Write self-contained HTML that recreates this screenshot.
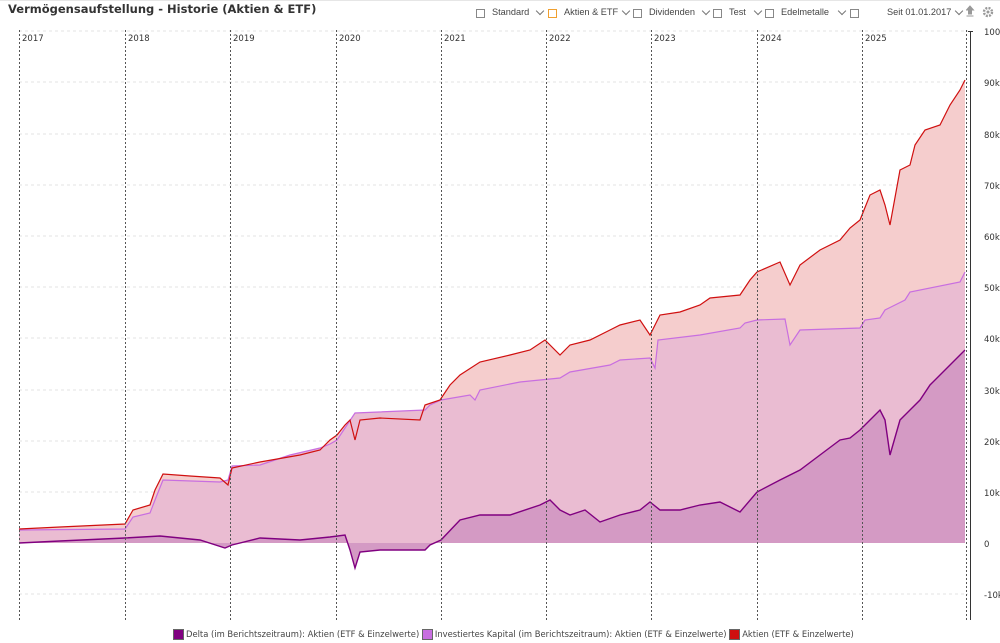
<!DOCTYPE html><html><head><meta charset="utf-8"><style>
body{margin:0;width:1000px;height:643px;background:#fff;font-family:"DejaVu Sans","Liberation Sans",sans-serif;overflow:hidden;position:relative}
.t{position:absolute;left:8px;top:2px;font-size:11.5px;font-weight:bold;color:#333}
.tb{position:absolute;top:7px;font-size:9.2px;color:#444;font-family:"Liberation Sans",sans-serif;white-space:nowrap}
.cb{position:absolute;top:9px;width:7px;height:7px;border:1px solid #888}
.ar{position:absolute;top:8px;width:5px;height:5px;border-right:1px solid #777;border-bottom:1px solid #777;transform:rotate(45deg)}
.lg{position:absolute;top:629px;font-size:8.4px;color:#444;white-space:nowrap}
.sw{display:inline-block;width:11px;height:11px;vertical-align:-3px;margin-right:2px;border:1px solid #666;box-sizing:border-box}
</style></head><body>
<div style="position:absolute;left:0;top:0;width:1000px;height:1px;background:#e6e6e6"></div>
<div class="t">Vermögensaufstellung - Historie (Aktien &amp; ETF)</div>
<div class="cb" style="left:476px"></div><div class="tb" style="left:492px">Standard</div><div class="ar" style="left:537px"></div>
<div class="cb" style="left:548px;border-color:#f0a030"></div><div class="tb" style="left:564px">Aktien &amp; ETF</div><div class="ar" style="left:623px"></div>
<div class="cb" style="left:633px"></div><div class="tb" style="left:649px">Dividenden</div><div class="ar" style="left:703px"></div>
<div class="cb" style="left:713px"></div><div class="tb" style="left:729px">Test</div><div class="ar" style="left:755px"></div>
<div class="cb" style="left:765px"></div><div class="tb" style="left:781px">Edelmetalle</div><div class="ar" style="left:839px"></div>
<div class="cb" style="left:850px"></div>
<div class="tb" style="left:887px">Seit 01.01.2017</div><div class="ar" style="left:956px"></div>
<svg width="30" height="16" style="position:absolute;left:966px;top:5px"><path d="M4 1 L0.5 5 H2.5 V9 H5.5 V5 H7.5 Z M0.5 11 H7.5" fill="#999" stroke="#999" stroke-width="1"/><circle cx="22" cy="7" r="4" fill="none" stroke="#999" stroke-width="2.4" stroke-dasharray="2,1.2"/><circle cx="22" cy="7" r="1.5" fill="#999"/></svg>
<svg width="1000" height="643" style="position:absolute;left:0;top:0">
<g stroke="#e3e3e3" stroke-dasharray="3,3">
<line x1="19" x2="968" y1="31" y2="31"/><line x1="19" x2="968" y1="82" y2="82"/><line x1="19" x2="968" y1="134" y2="134"/><line x1="19" x2="968" y1="185" y2="185"/><line x1="19" x2="968" y1="236" y2="236"/><line x1="19" x2="968" y1="287" y2="287"/><line x1="19" x2="968" y1="338" y2="338"/><line x1="19" x2="968" y1="390" y2="390"/><line x1="19" x2="968" y1="441" y2="441"/><line x1="19" x2="968" y1="492" y2="492"/><line x1="19" x2="968" y1="594" y2="594"/>
</g>
<polygon fill="#f5cdcd" points="19,543 19,529 60,527 125,524 133,510 150,505 155,490 163,474 190,476 220,478 228,485 232,468 260,462 300,455 320,450 330,440 337,435 345,425 350,420 355,440 360,420 380,418 420,420 425,405 440,400 450,385 460,375 480,362 510,355 530,350 545,340 560,355 570,345 590,340 610,330 620,325 640,320 650,335 660,315 680,312 700,305 710,298 740,295 750,280 757,272 780,262 790,285 800,265 820,250 840,240 850,228 860,220 870,195 880,190 885,205 890,225 900,170 910,165 915,145 925,130 940,125 950,105 960,90 965,80 965,543"/>
<polygon fill="#eabcd2" points="19,543 19,530 125,529 133,517 150,513 155,500 163,480 220,482 228,480 232,466 260,465 290,455 320,448 330,444 337,440 355,413 425,410 430,405 441,400 470,395 475,400 480,390 520,382 560,378 570,372 610,365 620,360 650,358 655,368 658,340 700,335 740,328 745,323 757,320 785,319 790,345 800,330 860,328 865,320 880,318 885,310 905,300 910,292 960,282 965,272 965,543"/>
<polygon fill="#d49ac4" points="19,543 60,541 125,538 160,536 200,540 225,548 232,545 260,538 300,540 330,537 345,535 350,550 355,568 360,552 380,550 425,550 430,545 441,540 460,520 480,515 510,515 540,505 550,500 560,510 570,515 585,510 600,522 620,515 640,510 650,502 660,510 680,510 700,505 720,502 740,512 757,492 780,480 800,470 820,455 840,440 850,438 860,430 870,420 880,410 885,420 890,455 900,420 910,410 920,400 930,385 940,375 950,365 960,355 965,350 965,543"/>
<polyline fill="none" stroke="#c86ee0" stroke-width="1.2" points="19,530 125,529 133,517 150,513 155,500 163,480 220,482 228,480 232,466 260,465 290,455 320,448 330,444 337,440 355,413 425,410 430,405 441,400 470,395 475,400 480,390 520,382 560,378 570,372 610,365 620,360 650,358 655,368 658,340 700,335 740,328 745,323 757,320 785,319 790,345 800,330 860,328 865,320 880,318 885,310 905,300 910,292 960,282 965,272"/>
<polyline fill="none" stroke="#d01010" stroke-width="1.2" points="19,529 60,527 125,524 133,510 150,505 155,490 163,474 190,476 220,478 228,485 232,468 260,462 300,455 320,450 330,440 337,435 345,425 350,420 355,440 360,420 380,418 420,420 425,405 440,400 450,385 460,375 480,362 510,355 530,350 545,340 560,355 570,345 590,340 610,330 620,325 640,320 650,335 660,315 680,312 700,305 710,298 740,295 750,280 757,272 780,262 790,285 800,265 820,250 840,240 850,228 860,220 870,195 880,190 885,205 890,225 900,170 910,165 915,145 925,130 940,125 950,105 960,90 965,80"/>
<polyline fill="none" stroke="#800080" stroke-width="1.4" points="19,543 60,541 125,538 160,536 200,540 225,548 232,545 260,538 300,540 330,537 345,535 350,550 355,568 360,552 380,550 425,550 430,545 441,540 460,520 480,515 510,515 540,505 550,500 560,510 570,515 585,510 600,522 620,515 640,510 650,502 660,510 680,510 700,505 720,502 740,512 757,492 780,480 800,470 820,455 840,440 850,438 860,430 870,420 880,410 885,420 890,455 900,420 910,410 920,400 930,385 940,375 950,365 960,355 965,350"/>
<g stroke="#555" stroke-dasharray="2,2">
<line x1="19.5" x2="19.5" y1="30" y2="620"/><line x1="125.5" x2="125.5" y1="30" y2="620"/><line x1="230.5" x2="230.5" y1="30" y2="620"/><line x1="336.5" x2="336.5" y1="30" y2="620"/><line x1="441.5" x2="441.5" y1="30" y2="620"/><line x1="546.5" x2="546.5" y1="30" y2="620"/><line x1="651.5" x2="651.5" y1="30" y2="620"/><line x1="757.5" x2="757.5" y1="30" y2="620"/><line x1="862.5" x2="862.5" y1="30" y2="620"/><line x1="966.5" x2="966.5" y1="30" y2="620"/>
</g>
<line x1="970.5" x2="970.5" y1="31" y2="620" stroke="#333"/>
<line x1="968" x2="973" y1="31.5" y2="31.5" stroke="#333"/>
<g font-size="8.5" fill="#333" font-family="DejaVu Sans,sans-serif">
<text x="22" y="41">2017</text><text x="128" y="41">2018</text><text x="233" y="41">2019</text><text x="339" y="41">2020</text><text x="444" y="41">2021</text><text x="549" y="41">2022</text><text x="654" y="41">2023</text><text x="760" y="41">2024</text><text x="865" y="41">2025</text>
<text x="984" y="35">100k</text><text x="984" y="86">90k</text><text x="984" y="138">80k</text><text x="984" y="189">70k</text><text x="984" y="240">60k</text><text x="984" y="291">50k</text><text x="984" y="342">40k</text><text x="984" y="394">30k</text><text x="984" y="445">20k</text><text x="984" y="496">10k</text><text x="984" y="547">0</text><text x="984" y="598">-10k</text>
</g>
</svg>
<div class="lg" style="left:173px"><span class="sw" style="background:#800080"></span>Delta (im Berichtszeitraum): Aktien (ETF &amp; Einzelwerte) <span class="sw" style="background:#c86ee0"></span>Investiertes Kapital (im Berichtszeitraum): Aktien (ETF &amp; Einzelwerte) <span class="sw" style="background:#d01010"></span>Aktien (ETF &amp; Einzelwerte)</div>
</body></html>
